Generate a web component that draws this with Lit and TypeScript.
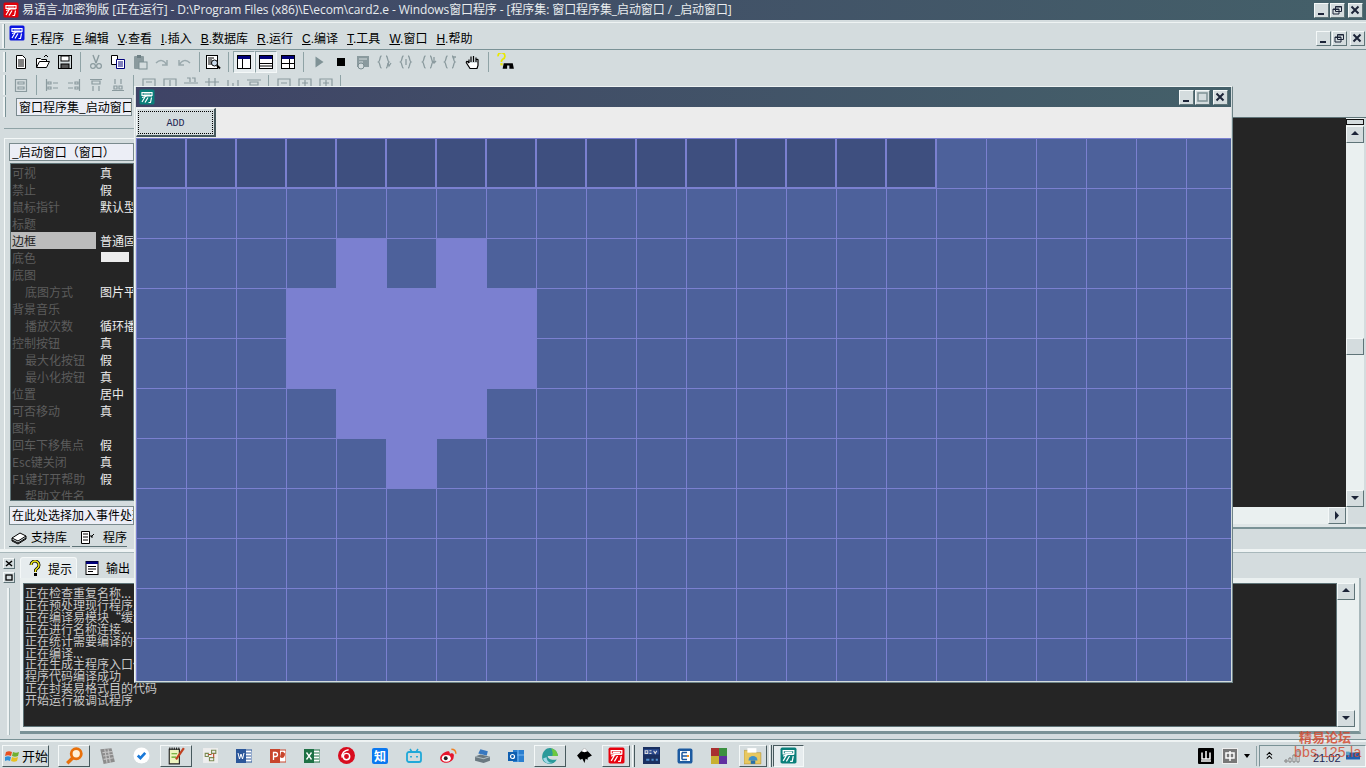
import { LitElement, css, html, svg } from 'lit'
import { customElement } from 'lit/decorators.js'

// little bitmap-ish icons, all on a 16x16 box
const s = (body: unknown, size = 16) => html`<svg width=${size} height=${size} viewBox="0 0 16 16">${body}</svg>`

const eLogo = (bg: string, size = 16) => s(svg`
  <rect x="0.5" y="0.5" width="15" height="15" rx="1.5" fill=${bg}/>
  <path d="M3 3.5h10v3H3zM4.5 5h7M3 8.5l5-1.5h5M6 8l-3 5M9 8.5l-3 5M12.5 8.5l-1 5h-2" fill="none" stroke="#fff" stroke-width="1.2"/>
`, size)

const doc = s(svg`<path d="M3.5 1.5h6l3 3v10h-9z" fill="#fff" stroke="#000"/><path d="M5 6h6M5 8h6M5 10h6M5 12h6" stroke="#000"/>`)
const open = s(svg`<path d="M1.5 13.5v-9h4l1 1h5v2" fill="#fff" stroke="#000"/><path d="M1.5 13.5l3-6h10l-3 6z" fill="#fff" stroke="#000"/><path d="M9 3l2-2 2 2" fill="none" stroke="#000"/>`)
const save = s(svg`<rect x="1.5" y="1.5" width="13" height="13" fill="#d4dcde" stroke="#000"/><rect x="4" y="2" width="8" height="5" fill="#fff" stroke="#000"/><rect x="4" y="10" width="8" height="4.5" fill="#555" stroke="#000"/>`)
const cut = s(svg`<path d="M5 1l3 8M11 1L8 9" stroke="#8a9a9e" stroke-width="1.4"/><circle cx="5" cy="12" r="2.4" fill="none" stroke="#8a9a9e" stroke-width="1.2"/><circle cx="11" cy="12" r="2.4" fill="none" stroke="#8a9a9e" stroke-width="1.2"/>`)
const copy = s(svg`<path d="M1.5 1.5h6v9h-6z" fill="#fff" stroke="#000"/><path d="M6.5 5.5h8v9h-8z" fill="#fff" stroke="#00007b"/><path d="M8 8h5M8 10h5M8 12h5" stroke="#00007b"/>`)
const paste = s(svg`<rect x="2" y="2" width="10" height="13" rx="1" fill="#8a9a9e"/><rect x="5" y="1" width="4" height="3" fill="#6d7f84"/><rect x="7" y="8" width="8" height="7" fill="#d4dcde" stroke="#7b8d91"/>`)
const redo = s(svg`<path d="M13 6v5H8M13 11C10 6 6 5 2 9" fill="none" stroke="#9aa9ad" stroke-width="1.5"/>`)
const undo = s(svg`<path d="M3 6v5h5M3 11c3-5 7-6 11-2" fill="none" stroke="#9aa9ad" stroke-width="1.5"/>`)
const preview = s(svg`<rect x="1.5" y="1.5" width="11" height="13" fill="#fff" stroke="#000"/><path d="M3 4h6M3 6h4M3 8h4M3 10h4" stroke="#000"/><circle cx="9.5" cy="9" r="3" fill="#cde" stroke="#000"/><path d="M12 11.5l3 3" stroke="#000" stroke-width="2"/>`)
const layout = (kind: number) => s(svg`
  <rect x="1.5" y="1.5" width="13" height="13" fill="#fff" stroke="#000"/>
  <rect x="2" y="2" width="12" height="3" fill="#00007b"/>
  ${kind === 0 ? svg`<path d="M6.5 5v9" stroke="#000"/>` : kind === 1 ? svg`<path d="M2 9.5h12M2 12h12" stroke="#000"/>` : svg`<path d="M2 9.5h12M9.5 5v9" stroke="#000"/>`}
`)
const play = s(svg`<path d="M4.5 2.5l8 5.5-8 5.500z" fill="#7f9296"/>`)
const stop = s(svg`<rect x="4" y="4" width="8" height="8" fill="#000"/>`)
const step = s(svg`<rect x="2" y="2" width="12" height="11" fill="#8a9a9e"/><path d="M4 5h8M4 8h4" stroke="#d4dcde"/><circle cx="6" cy="12" r="3" fill="#d4dcde" stroke="#7b8d91"/>`)
// { } with a small arrow, the four step-in / step-out buttons
const brace = (d: string) => s(svg`<path d="M4.500 2C2.500 2 3.500 7 1.500 8 3.500 9 2.500 14 4.500 14M9 2c2 0 1 5 3 6-2 1-1 6-3 6" fill="none" stroke="#8a9a9e" stroke-width="1.300"/><path d=${d} stroke="#8a9a9e" stroke-width="1.300" fill="none"/>`)
const hand = s(svg`<path d="M4 9V5.500M6 8V2.500M8.500 8V2M11 8V3.500M13 9V6c0-1-1-1-1 0M4 9L2.500 7.500c-1-.5-1.500.5-1 1.500L5 14.500h7l1-3V9" fill="#fff" stroke="#000" stroke-width="1.200"/>`)
const helpFind = s(svg`<path d="M1 3a3 3 0 1 1 4 2.500L4 7v1" fill="none" stroke="#e8e800" stroke-width="1.500"/><rect x="3" y="9" width="2" height="2" fill="#e8e800"/><path d="M6 9h8l1 5h-4V11H9v3H5z" fill="#000"/>`, 18)
const small = (d: string) => s(svg`<path d=${d} fill="none" stroke="#8a9a9e" stroke-width="1.200"/>`)

const row1 = [doc, open, save, 0, cut, copy, paste, redo, undo, 0]
const row2Left = [small('M2.500 2.500h11v12h-11zM5 5h6v2H5zM5 10h6v2H5z'), 0,
  small('M2.500 2v12M4 5h3v2H4zM4 10h3v2H4zM9 6h5M9 11h5'), small('M13.500 2v12M9 5h3v2H9zM9 10h3v2H9zM2 6h5M2 11h5'),
  small('M2 2.500h12M4 4h8v3H4zM5 14V9M11 14V9'), small('M2 13.500h12M4 9h3v3H4zM9 9h3v3H9zM5 2v5M11 2v5'), 0]
const row2Right = ['M2 2h12v10H2zM5 5h6', 'M2 2h12v10H2zM8 3v6', 'M1 6h14M4 1h3v4M9 1h3v4', 'M5 1v12M11 1v12M1 5h14', 'M3 3v10M8 6v7M13 3v10', 'M1 3h14M4 5h8v3H4z']
const row2End = ['M2 2h12v10H2zM5 6h6', 'M2 2h12v10H2zM8 3v7M5 6h6', 'M2 2h12v10H2zM8 3v7M5 6h6']

const menus = ['F.程序', 'E.编辑', 'V.查看', 'I.插入', 'B.数据库', 'R.运行', 'C.编译', 'T.工具', 'W.窗口', 'H.帮助']

const props: [string, string, number][] = [
  ['可视', '真', 0], ['禁止', '假', 0], ['鼠标指针', '默认型', 0], ['标题', '', 0], ['边框', '普通固定边框', 0],
  ['底色', '#', 0], ['底图', '', 0], ['底图方式', '图片平铺', 1], ['背景音乐', '', 0], ['播放次数', '循环播放', 1],
  ['控制按钮', '真', 0], ['最大化按钮', '假', 1], ['最小化按钮', '真', 1], ['位置', '居中', 0], ['可否移动', '真', 0],
  ['图标', '', 0], ['回车下移焦点', '假', 0], ['Esc键关闭', '真', 0], ['F1键打开帮助', '假', 0], ['帮助文件名', '', 1],
]

const log = ['正在检查重复名称...', '正在预处理现行程序...', '正在编译易模块“缓动', '正在进行名称连接...', '正在统计需要编译的子程序',
  '正在编译...', '正在生成主程序入口代码', '程序代码编译成功', '正在封装易格式目的代码', '开始运行被调试程序']

const heart = new Set(['2:4', '2:6', '3:3', '3:4', '3:5', '3:6', '3:7', '4:3', '4:4', '4:5', '4:6', '4:7', '5:4', '5:5', '5:6', '6:5'])

const tIcons = {
  search: s(svg`<circle cx="10" cy="6" r="4.500" fill="#fff2d8" stroke="#e8700a" stroke-width="2.500"/><path d="M7 9.500l-5 5" stroke="#e8700a" stroke-width="3"/>`, 18),
  grid: s(svg`<path d="M2 2l10-1 3 12-10 2z" fill="#8c8c8c"/><path d="M4 5l9-1M4.500 8l9-1.500M5 11l9-1.500M6 2l2 12M9 2l2 12" stroke="#c4c4c4"/>`, 18),
  check: s(svg`<circle cx="8" cy="8" r="7.500" fill="#fff"/><path d="M4.500 8l2.500 2.500 4.500-5" fill="none" stroke="#1878d8" stroke-width="2.500"/>`, 17),
  note: s(svg`<path d="M2 2h9v13H2z" fill="#eef4c0" stroke="#222"/><path d="M4 6h5M4 9h4" stroke="#5aa020"/><path d="M2 1.500h9" stroke="#222" stroke-dasharray="1 1" stroke-width="2"/><path d="M15 1L8 11" stroke="#c04020" stroke-width="2"/>`, 18),
  tool: s(svg`<rect x="1" y="1" width="14" height="14" fill="#eeeeee"/><path d="M3 6h3v3H3zM9 3h4v3H9zM7 10h4v3H7z" fill="none" stroke="#7a8a50"/><path d="M6 7h3M11 6v4" stroke="#c04020"/>`, 17),
  word: s(svg`<rect x="6" y="2" width="10" height="12" fill="#fff" stroke="#2b579a"/><path d="M10 5h5M10 8h5M10 11h5" stroke="#2b579a"/><rect x="0" y="1" width="10" height="14" fill="#2b579a"/><path d="M2 5l1.500 6L5 6l1.500 5L8 5" fill="none" stroke="#fff"/>`),
  ppt: s(svg`<rect x="6" y="2" width="10" height="12" fill="#fff" stroke="#c8452c"/><path d="M11 4a3 3 0 1 1-1 5z" fill="#c8452c"/><rect x="0" y="1" width="10" height="14" fill="#c8452c"/><path d="M3.500 12V4.500h2a2 2 0 0 1 0 4h-2" fill="none" stroke="#fff" stroke-width="1.300"/>`),
  excel: s(svg`<rect x="6" y="2" width="10" height="12" fill="#fff" stroke="#1e7145"/><path d="M10 5h5M10 8h5M10 11h5" stroke="#1e7145"/><rect x="0" y="1" width="10" height="14" fill="#1e7145"/><path d="M2.500 4.500l5 7M7.500 4.500l-5 7" stroke="#fff" stroke-width="1.300"/>`),
  net: s(svg`<circle cx="8" cy="8" r="8" fill="#d80c1e"/><circle cx="8" cy="9" r="3" fill="none" stroke="#fff" stroke-width="1.400"/><path d="M10 2.500C6 3 3 6 4 10" fill="none" stroke="#fff" stroke-width="1.400"/>`, 17),
  zhi: html`<span class="zhi">知</span>`,
  bili: s(svg`<path d="M4 1l2 3M12 1l-2 3" stroke="#20a8d8" stroke-width="1.500"/><rect x="1" y="4" width="14" height="10" rx="2" fill="none" stroke="#20a8d8" stroke-width="1.800"/><path d="M5 8v1.500M11 8v1.500" stroke="#20a8d8" stroke-width="1.800"/>`),
  weibo: s(svg`<path d="M1 10c0-3 5-7 8-6 1 1 0 2 1 2 2-1 4 0 3 3 0 3-4 5-7 5-3 0-5-2-5-4z" fill="#e6162d"/><ellipse cx="6.500" cy="10" rx="4" ry="3" fill="#fff"/><circle cx="6" cy="10" r="1.700" fill="#222"/><path d="M11 2c3 0 4 2 4 4" fill="none" stroke="#f08020" stroke-width="1.300"/>`, 18),
  printer: s(svg`<path d="M1 9l5-2 9 2v4l-6 2-8-2z" fill="#6a7880"/><path d="M4 6l2-4 7 2-1 4z" fill="#3878c0"/><path d="M1 9l8 2 6-2" fill="none" stroke="#b0bcc0"/>`, 17),
  outlook: s(svg`<rect x="5" y="2" width="11" height="12" fill="#2a7fd0"/><path d="M5 7h11M10 2v12" stroke="#7ab8f0"/><rect x="0" y="4" width="9" height="9" fill="#0f5fb0"/><circle cx="4.500" cy="8.500" r="2" fill="none" stroke="#fff" stroke-width="1.200"/>`),
  edge: s(svg`<path d="M1 9C1 3 6 0 9 1c4 1 6 4 6 7H6c0 3 4 4 8 3-2 4-7 5-10 3-2-1-3-3-3-5z" fill="#2a9a9a"/><path d="M9 1c4 1 6 4 6 7h-5c1-2 0-5-1-7z" fill="#6cc840"/><path d="M5 9c0 3 2 5 5 5-4 2-8-1-8-4z" fill="#a0d8e8"/>`, 18),
  ink: s(svg`<path d="M8 1l7 7-4 2v2l-2-1-1 4-2-4-2 1-3-4z" fill="#000"/><path d="M8 1l3 3-3 1-3-1z" fill="#fff"/>`, 17),
  dev: s(svg`<rect x="0" y="0" width="16" height="16" fill="#1a3060"/><rect x="1" y="2" width="14" height="5" fill="#2a4a90"/><path d="M2 3.500h2.500v2.500H2zM6 3.500h2M6 6h2M10 3.500l1.500 2.500L13 3.500" fill="none" stroke="#ddd"/><path d="M3 11h3v2H3zM8 11h2v2H8zM12 11h2v2h-2z" fill="#5090d0"/>`, 17),
  eblue: s(svg`<rect x="0.500" y="0.500" width="15" height="15" rx="2" fill="#1c5aa0"/><rect x="3" y="3" width="10" height="10" fill="#fff"/><path d="M5 4.500h5M5 8h5M5 11.500h5M5 4.500v7" stroke="#1c5aa0" stroke-width="1.500"/><rect x="10" y="7" width="2" height="2" fill="#f09020"/>`),
  squares: s(svg`<rect x="0" y="0" width="8" height="8" fill="#a83030"/><rect x="8" y="0" width="8" height="8" fill="#3c9040"/><rect x="0" y="8" width="8" height="8" fill="#c8b030"/><rect x="8" y="8" width="8" height="8" fill="#6030a0"/>`),
  folder: s(svg`<path d="M0 3h6l1 2h8v10H0z" fill="#e8c860" stroke="#b09030" stroke-width=".5"/><path d="M3 1h8v4H3z" fill="#fff"/><path d="M4 12a4 4 0 0 1 8 0z" fill="#4090c8"/><path d="M6 12h4v3H6z" fill="#2a70a8"/>`, 18),
  flag: s(svg`<path d="M1 4c2-1 4-1 6 0l-1 4C4 7 2 7 0 8z" fill="#e85020"/><path d="M8 4c2 1 4 1 6 0l-1 4c-2 1-4 1-6 0z" fill="#70b030"/><path d="M0 9c2-1 4-1 6 0l-1 4c-2-1-3-1-5 0z" fill="#3090d8"/><path d="M7 9c2 1 4 1 6 0l-1 4c-2 1-4 1-6 0z" fill="#e8c020"/>`),
  ime1: s(svg`<rect width="16" height="16" rx="1" fill="#000"/><path d="M4 4.500v6.500h8V4.500M8 3v8M3 13h10" fill="none" stroke="#fff" stroke-width="1.500"/>`),
  ime2: s(svg`<rect width="16" height="16" fill="#777"/><rect x=".5" y=".5" width="15" height="15" fill="none" stroke="#eee"/><path d="M4 5h8v5H4zM8 3v10" fill="none" stroke="#fff" stroke-width="1.500"/>`),
}

@customElement('app-root')
export class AppRoot extends LitElement {
  static styles = css`
    :host {
      display: block;
      position: relative;
      width: 1366px;
      height: 768px;
      overflow: hidden;
      background: #d4dcde;
      font: 12px/14px "Open Sans", "Noto Sans CJK SC", sans-serif;
      color: #000;
    }
    svg { display: block; flex: none; }
    .app { display: flex; flex-direction: column; height: 768px; }
    .app > * { flex: none; }

    .title {
      height: 20px;
      display: flex;
      align-items: center;
      gap: 3px;
      padding: 0 3px 0 3px;
      background: linear-gradient(90deg, #3f4366, #446069);
      color: #e8ecee;
      font: 12px/20px "Open Sans", "Noto Sans CJK SC", sans-serif;
      letter-spacing: -.09px;
      white-space: nowrap;
    }
    .title .txt { flex: 1; }
    .winbtns { display: flex; gap: 1px; }
    .wb {
      width: 15px;
      height: 15px;
      box-sizing: border-box;
      background: #d4dcde;
      border: 1px solid;
      border-color: #f4f8f8 #5f7478 #5f7478 #f4f8f8;
      display: flex;
      align-items: center;
      justify-content: center;
    }
    .wb.last { margin-left: 2px; }

    .menubar {
      height: 28px;
      margin-top: 2px;
      border-top: 1px solid #eef3f3;
      border-bottom: 1px solid #7a9296;
      box-sizing: border-box;
      display: flex;
      align-items: center;
      padding: 0 1px 0 2px;
    }
    .menubar .winbtns { position: relative; top: 2px; }
    .grip { width: 2px; height: 90%; margin-right: 4px; background: #eef3f3; border-right: 1px solid #7a9296; flex: none; }
    .menus { flex: 1; display: flex; align-items: center; gap: 9px; padding-left: 8px; position: relative; top: 3px; }
    .menus span { font: 12px/14px "Liberation Sans", "Noto Sans CJK SC", sans-serif; }
    .menulogo { margin: -6px -2px 0 0; }

    .tb { height: 23px; display: flex; align-items: center; padding-left: 3px; }
    .tb .grip { height: 20px; }
    .tool { width: 22px; height: 22px; display: flex; align-items: center; justify-content: center; flex: none; }
    .tool.on { background: #e6ecee; box-sizing: border-box; border: 1px solid; border-color: #8fa3a6 #f4f8f8 #f4f8f8 #8fa3a6; }
    .sep { width: 1px; height: 20px; margin: 0 4px; background: #8fa3a6; flex: none; }
    .preview { margin-left: -2px; }
    .combo {
      width: 116px;
      height: 18px;
      margin-left: 6px;
      box-sizing: border-box;
      background: #eceef6;
      border: 1px solid #7a8a8e;
      font: 12px/16px "Noto Sans CJK SC", sans-serif;
      padding-left: 2px;
      white-space: nowrap;
      overflow: hidden;
    }

    .work { height: 431px; display: flex; }
    .left { width: 134px; flex: none; padding: 10px 0 0 0; display: flex; flex-direction: column; }
    .rule { height: 1px; background: #8fa3a6; margin-bottom: 9px; margin-left: 4px; }
    .leftbox {
      margin-left: 4px;
      padding: 4px 0 0 4px;
      border-left: 1px solid #f4f8f8;
      border-top: 1px solid #f4f8f8;
      flex: 1;
      display: flex;
      flex-direction: column;
      min-height: 0;
    }
    .field {
      height: 18px;
      flex: none;
      box-sizing: border-box;
      background: #eceef6;
      border: 1px solid #7a8a8e;
      font: 12px/16px "Noto Sans CJK SC", sans-serif;
      padding-left: 2px;
      white-space: nowrap;
      overflow: hidden;
    }
    .props {
      height: 338px;
      flex: none;
      margin: 2px 0 5px 1px;
      background: #252525;
      border: 1px solid #5f7478;
      box-sizing: border-box;
      overflow: hidden;
    }
    .prop { height: 17px; display: flex; font: 12px/17px "Noto Sans CJK SC", sans-serif; white-space: nowrap; }
    .pn { width: 85px; padding-left: 1px; box-sizing: border-box; color: #5c5c5c; margin-right: 4px; flex: none; overflow: hidden; }
    .pn.sub { padding-left: 14px; }
    .pn.sel { background: #bcbcbc; color: #222; }
    .pv { color: #ececec; }
    .swatch { display: block; width: 28px; height: 10px; background: #ececec; margin: 3px 0 0 1px; }
    .tabs { display: flex; gap: 2px; margin-top: 3px; font: 12px/18px "Noto Sans CJK SC", sans-serif; }
    .tab { height: 18px; display: flex; align-items: center; gap: 4px; padding: 0 3px 0 2px; border-bottom: 1px solid #5f7478; flex: none; white-space: nowrap; }
    .tab + .tab { padding-right: 0; padding-left: 7px; gap: 8px; }

    .right { flex: 1; display: flex; flex-direction: column; min-width: 0; }
    .codewrap { height: 389px; margin-top: -1px; border-top: 1px solid #5f7478; display: flex; flex: none; }
    .code { flex: 1; background: #252525; }
    .vbar { width: 18px; background: #eaf0f0; display: flex; flex-direction: column; justify-content: space-between; position: relative; margin-right: 2px; padding-top: 8px; box-sizing: border-box; }
    .split { position: absolute; left: 0; top: 1px; width: 18px; height: 6px; box-sizing: border-box; background: #d4dcde; border: 1px solid #111; }
    .ab {
      width: 18px;
      height: 17px;
      box-sizing: border-box;
      background: #d4dcde;
      border: 1px solid;
      border-color: #f4f8f8 #5f7478 #5f7478 #f4f8f8;
      display: flex;
      align-items: center;
      justify-content: center;
      flex: none;
    }
    .thumb { position: absolute; left: 0; top: 220px; }
    .hbar { height: 17px; display: flex; padding: 0 20px 3px 0; border-bottom: 2px solid #7a9296; background: linear-gradient(#eaf0f0 17px, #dfe6e7 17px); flex: none; }
    .hbar i { flex: 1; }
    .hbar > div { box-shadow: 20px 0 0 #d4dcde; }
    .hrule { height: 3px; background: #eef3f3; border-bottom: 1px solid #a8b8bb; }

    .console { height: 182px; display: flex; }
    .side { width: 20px; flex: none; display: flex; flex-direction: column; align-items: flex-start; gap: 3px; padding: 5px 0 0 3px; box-sizing: border-box; }
    .side i { width: 2px; height: 148px; margin: 2px 0 0 4px; background: #eef3f3; border-right: 1px solid #a8b8bb; }
    .sb { width: 12px; height: 11px; box-sizing: border-box; background: #d4dcde; border: 1px solid; border-color: #f4f8f8 #5f7478 #5f7478 #f4f8f8; display: flex; align-items: center; justify-content: center; }
    .cbody { flex: 1; min-width: 0; padding-top: 4px; }
    .ctabs { height: 21px; display: flex; font: 12px/21px "Noto Sans CJK SC", sans-serif; }
    .ctab { display: flex; align-items: center; gap: 5px; padding: 0 6px; width: 57px; box-sizing: border-box; background: #e6ecee; border: 1px solid #f4f8f8; border-bottom: 0; border-radius: 3px 3px 0 0; flex: none; white-space: nowrap; }
    .ctab + .ctab { background: none; border: 0; width: 60px; padding-left: 7px; gap: 6px; }
    .cpanel {
      height: 156px;
      box-sizing: border-box;
      margin-right: 5px;
      padding: 5px 4px 0 3px;
      background: #eaf0f0;
      border-bottom: 3px solid #7a9296;
      border-right: 2px solid #a8b8bb;
      display: flex;
    }
    .log {
      flex: 1;
      height: 144px;
      box-sizing: border-box;
      background: #252525;
      border: 1px solid #5f7478;
      padding: 3px 1px;
      color: #c8c8c8;
      font: 12px/11.9px "Noto Sans CJK SC", sans-serif;
      white-space: nowrap;
    }
    .log2 { width: 18px; display: flex; flex-direction: column; justify-content: space-between; background: #eaf0f0; height: 144px; }

    .taskbar {
      height: 29px;
      margin-top: 4px;
      border-top: 1px solid #7a9296;
      box-shadow: inset 0 2px 0 #eef3f3;
      box-sizing: border-box;
      display: flex;
      align-items: center;
      padding: 3px 0 0 2px;
    }
    .ti { width: 34px; height: 23px; display: flex; align-items: center; justify-content: center; flex: none; }
    .tbtn { width: 32px; height: 22px; box-sizing: border-box; border: 1px solid; border-color: #f4f8f8 #47595d #47595d #f4f8f8; display: flex; align-items: center; justify-content: center; flex: none; }
    .tbtn.narrow { width: 28px; }
    .start { width: 47px; gap: 1px; font: 13px/20px "Noto Sans CJK SC", sans-serif; margin-right: 9px; justify-content: flex-start; padding-left: 2px; white-space: nowrap; }
    .tbtn.active { width: 31px; background: #e6ecee; border-color: #47595d #f4f8f8 #f4f8f8 #47595d; }
    .bar { width: 3px; height: 22px; margin: 0 1px 0 2px; background: #d4dcde; border-left: 1px solid #f4f8f8; border-right: 1px solid #47595d; box-sizing: border-box; flex: none; }
    .zhi { width: 16px; height: 16px; background: #0a78f0; color: #fff; border-radius: 2px; font: 700 12px/16px "Noto Sans CJK SC", sans-serif; text-align: center; }
    .fill { flex: 1; }
    .ime2 { margin-left: 8px; }
    .caret { width: 0; height: 0; border: 3px solid transparent; border-top: 4px solid #000; border-bottom: 0; margin: 0 6px 0 6px; }
    .tray {
      width: 107px;
      height: 22px;
      box-sizing: border-box;
      margin-left: 2px;
      border: 1px solid;
      border-color: #7a9296 #f4f8f8 #f4f8f8 #7a9296;
      display: flex;
      align-items: center;
      padding-left: 5px;
      gap: 5px;
      font: 11px/20px "Liberation Sans", sans-serif;
      color: #1c2450;
    }
    .clock { margin: 4px 0 0 8px; }

    .watermark {
      position: absolute;
      left: 1294px;
      top: 729px;
      width: 62px;
      text-align: center;
      color: #d2492e;
      opacity: .82;
      font: 700 13px/16px "Noto Sans CJK SC", sans-serif;
    }
    .watermark b { display: block; font: 400 14px/15px "Liberation Sans", sans-serif; letter-spacing: .3px; }

    .win {
      position: absolute;
      left: 134px;
      top: 86px;
      width: 1099px;
      height: 597px;
      box-sizing: border-box;
      background: #d4dcde;
      border: 1px solid;
      border-color: #eef3f3 #6f8488 #6f8488 #eef3f3;
      padding: 0 1px 1px;
      display: flex;
      flex-direction: column;
    }
    .wt { height: 20px; flex: none; display: flex; align-items: center; padding: 0 3px; background: linear-gradient(90deg, #3f4366, #446069); justify-content: space-between; }
    .wbar { height: 30px; padding-top: 1px; flex: none; background: #ececec; }
    .add {
      display: block;
      width: 80px;
      height: 29px;
      box-sizing: border-box;
      background: #d4dcde;
      border: 1px solid;
      border-color: #f4f8f8 #47595d #47595d #f4f8f8;
      border-width: 1px 2px 2px 1px;
      font: 10px/21px "Liberation Mono", monospace;
      text-align: center;
      padding: 2px 1px;
      color: #1c2450;
    }
    .add span { display: block; height: 21px; line-height: 23px; border: 1px dotted #000; }
    .board {
      flex: 1;
      min-height: 0;
      overflow: hidden;
      display: grid;
      grid-template-columns: repeat(22, 50px);
      grid-auto-rows: 50px;
      background: #4d619b;
    }
    .c { box-sizing: border-box; border-left: 1px solid #7b80d0; border-top: 1px solid #7b80d0; background: #4d619b; }
    .c.dark { background: #3e4f7f; border: 1px solid #7b80d0; }
    .c.hot { background: #7b80d0; }
  `

  private wb(kind: string, last = false) {
    const glyph: Record<string, unknown> = {
      min: svg`<rect x="2" y="8" width="6" height="2" fill="#1c2438"/>`,
      restore: svg`<path d="M3.500 1.500h6v5h-6zM1 4h6v5H1z" fill="#d4dcde" stroke="#1c2438"/><path d="M3.500 2h6M1 4.500h6" stroke="#1c2438" stroke-width="1"/>`,
      max: svg`<rect x="1" y="1" width="9" height="8" fill="#d4dcde" stroke="#7f9296" stroke-width="1.500"/>`,
      close: svg`<path d="M1.500 1.500l7 7M8.500 1.500l-7 7" stroke="#1c2438" stroke-width="2"/>`,
    }
    return html`<div class="wb ${last ? 'last' : ''}"><svg width="11" height="10" viewBox="0 0 11 10">${glyph[kind]}</svg></div>`
  }

  private arrow(dir: 'up' | 'down' | 'right') {
    const d = dir === 'up' ? 'M1 5l4-4 4 4z' : dir === 'down' ? 'M1 2l4 4 4-4z' : 'M3 0l4 4.500-4 4.500z'
    return html`<div class="ab"><svg width="10" height="9" viewBox="0 0 10 9"><path d=${d} fill="#1c2438"/></svg></div>`
  }

  private renderIcons(list: unknown[]) {
    return list.map((ic) => (ic === 0 ? html`<div class="sep"></div>` : html`<div class="tool">${ic}</div>`))
  }

  render() {
    const i = tIcons
    return html`
      <div class="app">
        <div class="title">
          ${eLogo('#e0000a')}
          <span class="txt">易语言-加密狗版 [正在运行] - D:\\Program Files (x86)\\E\\ecom\\card2.e - Windows窗口程序 - [程序集: 窗口程序集_启动窗口 / _启动窗口]</span>
          <div class="winbtns">${this.wb('min')}${this.wb('restore')}${this.wb('close', true)}</div>
        </div>

        <div class="menubar">
          <div class="grip"></div>
          <div class="menulogo">${eLogo('#0a14e0')}</div>
          <div class="menus">${menus.map((m) => html`<span><u>${m[0]}</u>${m.slice(1)}</span>`)}</div>
          <div class="winbtns">${this.wb('min')}${this.wb('restore')}${this.wb('close', true)}</div>
        </div>

        <div class="tb">
          <div class="grip"></div>
          ${this.renderIcons(row1)}
          <div class="tool preview">${preview}</div>
          <div class="sep"></div>
          <div class="tool on">${layout(0)}</div><div class="tool on">${layout(1)}</div><div class="tool">${layout(2)}</div>
          <div class="sep"></div>
          <div class="tool">${play}</div><div class="tool">${stop}</div><div class="tool">${step}</div>
          <div class="tool">${brace('M14 9l-2 3-1-3')}</div><div class="tool">${brace('M7 5v6')}</div><div class="tool">${brace('M13 3v6M11 7l2 2 2-2')}</div><div class="tool">${brace('M13 3l-3 0M10 3l1 2')}</div>
          <div class="tool">${hand}</div>
          <div class="sep"></div>
          <div class="tool" style="width:26px">${helpFind}</div>
        </div>

        <div class="tb">
          <div class="grip"></div>
          ${this.renderIcons(row2Left)}
          ${row2Right.map((d) => html`<div class="tool" style="width:21px">${small(d)}</div>`)}
          <div class="sep"></div>
          ${row2End.map((d) => html`<div class="tool" style="width:21px">${small(d)}</div>`)}
          <div class="sep"></div>
        </div>

        <div class="tb" style="height:22px">
          <div class="grip"></div>
          <div class="combo">窗口程序集_启动窗口</div>
        </div>

        <div class="work">
          <div class="left">
            <div class="rule"></div>
            <div class="leftbox">
              <div class="field">_启动窗口（窗口）</div>
              <div class="props">
                ${props.map(([n, v, sub]) => html`
                  <div class="prop">
                    <div class="pn ${sub ? 'sub' : ''} ${n === '边框' ? 'sel' : ''}">${n}</div>
                    <div class="pv">${v === '#' ? html`<span class="swatch"></span>` : v}</div>
                  </div>`)}
              </div>
              <div class="field" style="height:19px">在此处选择加入事件处理子程序</div>
              <div class="tabs">
                <div class="tab">
                  ${s(svg`<path d="M1 9l8-5 6 3-8 5z" fill="#fff" stroke="#000"/><path d="M1 9v3l6 3 8-5V7M1 11l6 3 8-5" fill="none" stroke="#000"/>`)}
                  支持库
                </div>
                <div class="tab">
                  ${s(svg`<path d="M2.500 2.500h8v12h-8z" fill="#fff" stroke="#000"/><path d="M4 5h5M4 8h5M4 11h5" stroke="#000"/><path d="M15 5l-3 3M12 6v2h2" stroke="#000" fill="none"/>`)}
                  程序
                </div>
              </div>
            </div>
          </div>
          <div class="right">
            <div class="codewrap">
              <div class="code"></div>
              <div class="vbar">
                <div class="split"></div>
                ${this.arrow('up')}<div class="ab thumb"></div>${this.arrow('down')}
              </div>
            </div>
            <div class="hbar"><i></i><div>${this.arrow('right')}</div></div>
          </div>
        </div>
        <div class="hrule"></div>

        <div class="console">
          <div class="side">
            <div class="sb"><svg width="8" height="7" viewBox="0 0 8 7"><path d="M1 1l6 5M7 1L1 6" stroke="#000" stroke-width="1.500"/></svg></div>
            <div class="sb"><svg width="8" height="7" viewBox="0 0 8 7"><rect x="1" y="1" width="6" height="5" fill="none" stroke="#000" stroke-width="1.300"/></svg></div>
            <i></i>
          </div>
          <div class="cbody">
            <div class="ctabs">
              <div class="ctab">${s(svg`<path d="M4 5a4 4 0 1 1 6 3.500L8.500 10v2" fill="none" stroke="#000" stroke-width="3"/><path d="M4 5a4 4 0 1 1 6 3.500L8.500 10v2" fill="none" stroke="#f0e818" stroke-width="1.500"/><rect x="7" y="13" width="3" height="3" fill="#000"/>`)}提示</div>
              <div class="ctab">${s(svg`<rect x="2" y="1.500" width="12" height="13" fill="#fff" stroke="#000"/><rect x="2" y="1.500" width="12" height="2.500" fill="#00007b"/><path d="M4 6.500h8M4 9h8M4 11.500h5" stroke="#000"/>`)}输出</div>
            </div>
            <div class="cpanel">
              <div class="log">${log.map((l) => html`<div>${l}</div>`)}</div>
              <div class="log2">${this.arrow('up')}${this.arrow('down')}</div>
            </div>
          </div>
        </div>

        <div class="taskbar">
          <div class="tbtn start">${i.flag}开始</div>
          <div class="tbtn">${i.search}</div>
          <div class="ti">${i.grid}</div>
          <div class="ti">${i.check}</div>
          <div class="tbtn" style="margin-left:2px">${i.note}</div>
          <div class="ti" style="margin-left:1px">${i.tool}</div>
          <div class="ti">${i.word}</div>
          <div class="ti">${i.ppt}</div>
          <div class="ti">${i.excel}</div>
          <div class="ti">${i.net}</div>
          <div class="ti">${i.zhi}</div>
          <div class="ti">${i.bili}</div>
          <div class="ti">${i.weibo}</div>
          <div class="ti">${i.printer}</div>
          <div class="ti">${i.outlook}</div>
          <div class="tbtn" style="margin-left:1px">${i.edge}</div>
          <div class="ti" style="margin-left:1px;width:35px">${i.ink}</div>
          <div class="tbtn narrow">${eLogo('#e8000c', 17)}</div>
          <div class="bar"></div>
          <div class="ti" style="margin-left:-2px">${i.dev}</div>
          <div class="ti">${i.eblue}</div>
          <div class="ti">${i.squares}</div>
          <div class="tbtn narrow" style="margin-left:3px">${i.folder}</div>
          <div class="bar"></div>
          <div class="tbtn active">${eLogo('#0a7f7a', 17)}</div>
          <div class="fill"></div>
          ${i.ime1}
          <div class="ime2">${i.ime2}</div>
          <div class="caret"></div>
          <div class="sep" style="margin:0"></div>
          <div class="tray">
            ${s(svg`<path d="M2 7l3-3 3 3M2 11l3-3 3 3" fill="none" stroke="#000" stroke-width="1.200"/>`, 14)}
            ${s(svg`<path d="M1 14h2v-2H1zM5 14h2v-4H5zM9 14h2V7H9zM13 14h2V3h-2z" fill="#fff" stroke="#555" stroke-width=".7"/>`)}
            <span class="clock">21:02</span>
            ${s(svg`<rect x="0" y="4" width="16" height="8" fill="#2060b0"/><rect x="0" y="3" width="4" height="4" fill="#60a0c0"/>`, 14)}
          </div>
        </div>
      </div>

      <div class="win">
        <div class="wt">
          ${eLogo('#0a7f7a')}
          <div class="winbtns">${this.wb('min')}${this.wb('max')}${this.wb('close', true)}</div>
        </div>
        <div class="wbar"><button class="add"><span>ADD</span></button></div>
        <div class="board">
          ${Array.from({ length: 11 }, (_, r) => Array.from({ length: 22 }, (_, c) => {
            const dark = r === 0 && c < 16
            const hot = heart.has(`${r}:${c}`)
            return html`<div class="c ${dark ? 'dark' : ''} ${hot ? 'hot' : ''}"></div>`
          }))}
        </div>
      </div>

      <div class="watermark">精易论坛<b>bbs.125.la</b></div>
    `
  }
}
